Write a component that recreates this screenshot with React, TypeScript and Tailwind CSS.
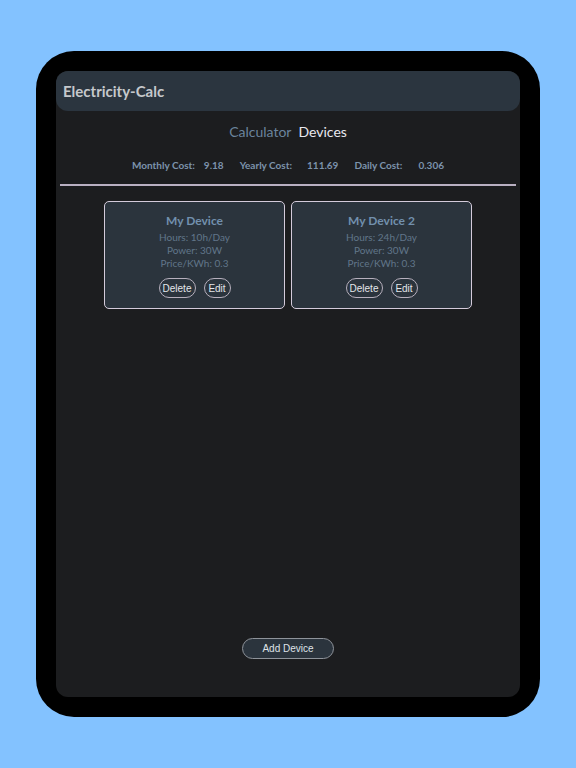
const devices = [
  { name: "My Device", hours: 10, power: 30, price: 0.3 },
  { name: "My Device 2", hours: 24, power: 30, price: 0.3 },
];

function DeviceCard({ device }: { device: (typeof devices)[number] }) {
  return (
    <div className="flex h-[108px] w-[181px] flex-col items-center rounded-[5px] border-[1.5px] border-[#d4cbdb] bg-[#2b343d] pt-[11px]">
      <p className="text-[12px] font-bold leading-[16px] text-[#7290ad]">{device.name}</p>
      <div className="mt-[2px] flex flex-col items-center text-[10px] leading-[13px] text-[#61768a]">
        <p>Hours: {device.hours}h/Day</p>
        <p>Power: {device.power}W</p>
        <p>Price/KWh: {device.price}</p>
      </div>
      <div className="mt-[8px] flex gap-[8px] font-['Liberation_Sans',sans-serif] text-[10px] text-[#e3e6ea]">
        <button className="h-[20px] w-[37px] rounded-full border border-[#b7b0bd]">Delete</button>
        <button className="h-[20px] w-[27px] rounded-full border border-[#b7b0bd]">Edit</button>
      </div>
    </div>
  );
}

export default function App() {
  return (
    <div className="flex min-h-[768px] w-full items-start justify-center bg-[#83c2ff] pt-[51px] font-['Lato',sans-serif]">
      <div className="h-[666px] w-[504px] rounded-[38px] bg-black p-[20px]">
        <div className="flex h-full flex-col rounded-[12px] bg-[#1c1d1f]">
          <header className="flex h-[40px] items-center rounded-[12px] bg-[#2b353f] px-[7px]">
            <h1 className="text-[15px] font-bold text-[#c5c8cc]">Electricity-Calc</h1>
          </header>

          <nav className="mt-[12px] flex justify-center gap-[7px] text-[14px] leading-[18px]">
            <span className="text-[#6b849d]">Calculator</span>
            <span className="text-[#e8e8ef]">Devices</span>
          </nav>

          <div className="mt-[18px] flex justify-center gap-[16px] text-[10px] font-bold leading-[13px] text-[#7c93ac]">
            <span>
              Monthly Cost:<span className="ml-[9px]">9.18</span>
            </span>
            <span>
              Yearly Cost:<span className="ml-[15px]">111.69</span>
            </span>
            <span>
              Daily Cost:<span className="ml-[16px]">0.306</span>
            </span>
          </div>

          <div className="mx-[4px] mt-[12px] h-[2px] bg-[#b9b0c2]" />

          <div className="mt-[15px] flex justify-center gap-[6px]">
            {devices.map((d) => (
              <DeviceCard key={d.name} device={d} />
            ))}
          </div>

          <div className="mt-auto mb-[38px] flex justify-center">
            <button className="h-[21px] w-[92px] rounded-full border border-[#8e939a] bg-[#2b343d] font-['Liberation_Sans',sans-serif] text-[10px] text-[#dfe3e8]">
              Add Device
            </button>
          </div>
        </div>
      </div>
    </div>
  );
}
